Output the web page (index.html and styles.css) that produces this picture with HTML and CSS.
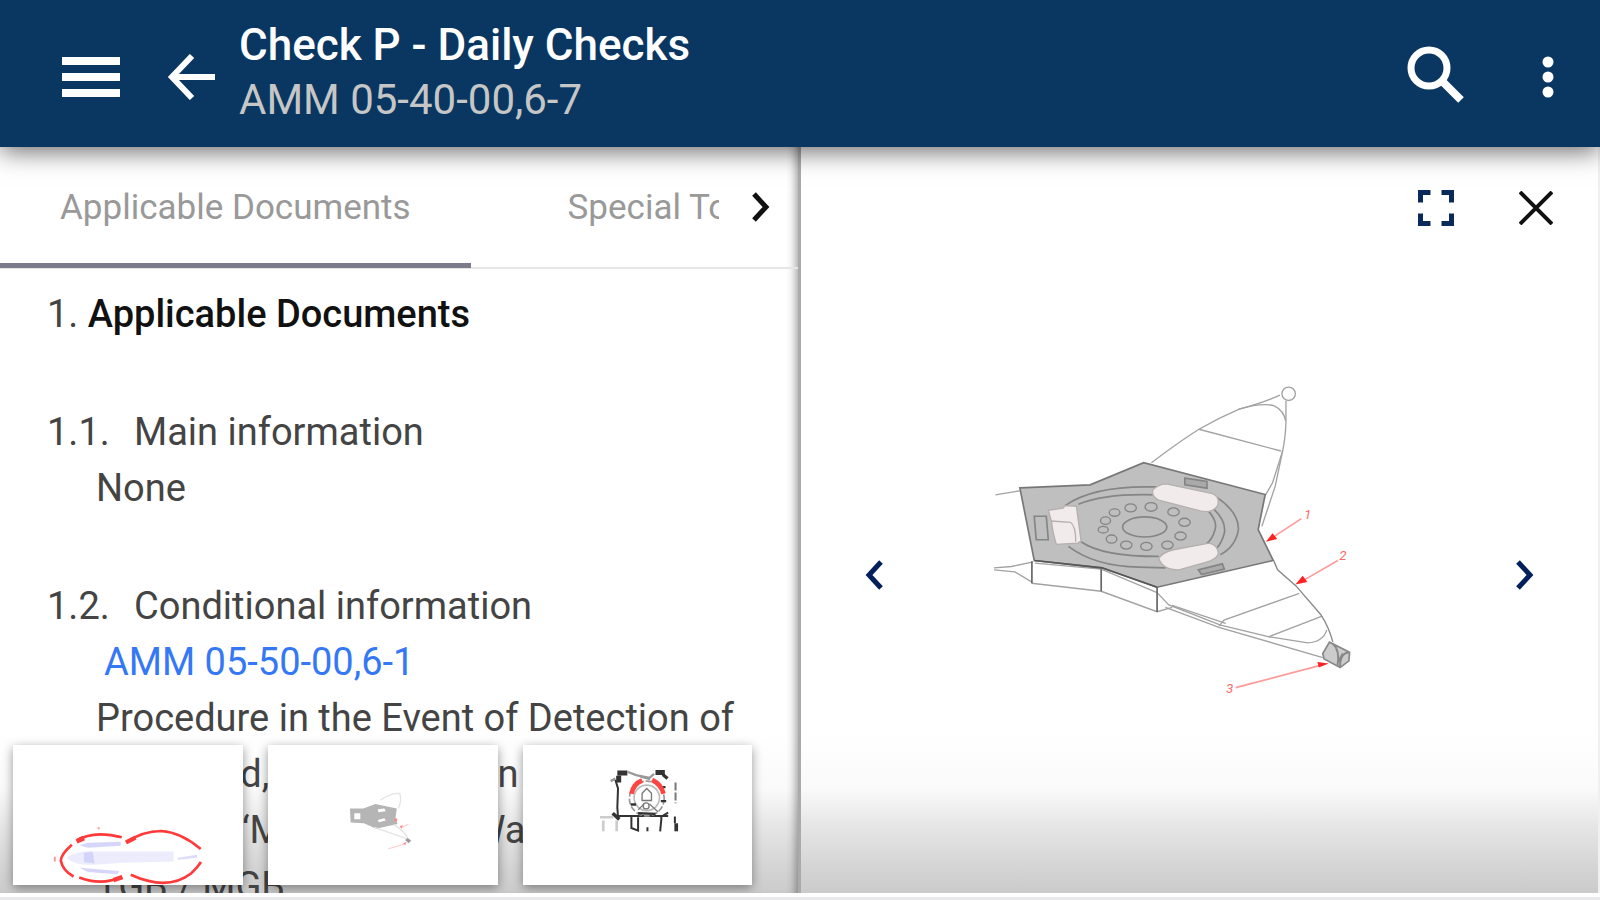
FILE: index.html
```html
<!DOCTYPE html>
<html lang="en">
<head>
  <meta charset="UTF-8" />
  <meta name="viewport" content="width=device-width, initial-scale=1.0" />
  <title>Check P - Daily Checks</title>
  <link rel="stylesheet" href="styles.css">
</head>
<body>
  <header class="topbar">
    <button class="icon-btn menu-btn" aria-label="Menu">
      <svg width="58" height="40" viewBox="0 0 58 40" fill="#fff"><path d="M0 0h58v8H0zM0 16h58v8H0zM0 32h58v8H0z"/></svg>
    </button>
    <button class="icon-btn back-btn" aria-label="Back">
      <svg width="48" height="46" viewBox="0 0 48 46" fill="none" stroke="#fff" stroke-width="6"><path d="M4 23h44M25 2L5 23l20 21"/></svg>
    </button>
    <div class="titles">
      <h1>Check P - Daily Checks</h1>
      <p>AMM 05-40-00,6-7</p>
    </div>
    <button class="icon-btn search-btn" aria-label="Search">
      <svg width="58" height="58" viewBox="0 0 58 58" fill="none" stroke="#fff"><circle cx="22" cy="22" r="18" stroke-width="7"/><path d="M36 36l18 18" stroke-width="8"/></svg>
    </button>
    <button class="icon-btn" aria-label="More options">
      <svg width="12" height="42" viewBox="0 0 12 42" fill="#fff"><circle cx="6" cy="6" r="5.5"/><circle cx="6" cy="21" r="5.5"/><circle cx="6" cy="36" r="5.5"/></svg>
    </button>
  </header>

  <main class="content">
    <section class="doc-pane">
      <nav class="tabs">
        <div class="tab-list">
          <a href="#applicable" class="tab active">Applicable Documents</a>
          <a href="#tools" class="tab">Special Tools</a>
        </div>
        <button class="icon-btn tab-next" aria-label="Next tabs">
          <svg width="18" height="30" viewBox="0 0 18 30" fill="none" stroke="#111" stroke-width="5"><path d="M2 2l12 13L2 28"/></svg>
        </button>
      </nav>

      <article class="doc" id="applicable">
        <h2>1. <b>Applicable Documents</b></h2>
        <h3><span class="num">1.1.</span>Main information</h3>
        <p>None</p>
        <h3><span class="num">1.2.</span>Conditional information</h3>
        <a href="#amm" class="ref">AMM 05-50-00,6-1</a>
        <p>Procedure in the Event of Detection of<br>Increased, High Vibration<br>Caution “Master Light Warning”<br>TGB / MGB</p>
      </article>

      <div class="thumbs">
        <button class="thumb" aria-label="Figure 1">
          <svg viewBox="0 0 687 420" fill="none">
            <g stroke="#ff3a3a" stroke-width="8">
              <path d="M190 286q50-32 135-10" stroke-width="8"/>
              <path d="M190 288l22-10" stroke-width="14"/>
              <path d="M338 291q50-34 105-34 60 4 118 54"/>
              <path d="M338 291l28-14" stroke-width="13"/>
              <path d="M176 298q-34 30-33 48 6 30 38 47"/>
              <path d="M198 396q66 26 128-2"/>
              <path d="M300 404l27-9" stroke-width="14"/>
              <path d="M352 388q110 50 180-4 20-18 30-34"/>
            </g>
            <path d="M256 246v6M125 334v14" stroke="#f99" stroke-width="6"/>
            <g fill="#7878f0">
              <path d="M160 336q30-20 80-18h240v30l-150 4-90 6q-60 2-80-22" opacity=".14"/>
              <path d="M198 300l26-8 98-3v12l-98 6zM198 366l26 3 94 8-6 9-88-6z" opacity=".3"/>
              <path d="M212 322l26-4 6 36-32-4z" opacity=".2"/>
              <path d="M490 338l60-10v9l-56 6z" opacity=".25"/>
            </g>
          </svg>
        </button>
        <button class="thumb" aria-label="Figure 2">
          <svg viewBox="0 0 687 420" fill="none">
            <path d="M245 190h40l36-14 64 14-4 28 6 18-64 14-36-16-40-2z" fill="#b5b5b5"/>
            <path d="M258 204h18v18h-18zM328 192l20-2 4 8-22 3zM328 224l20-5 4 7-20 5z" fill="#fff"/>
            <path d="M336 165q34-24 58-20 6 20-4 44M318 246l96 34M376 238q34 20 42 42" stroke="#e4e4e4" stroke-width="4"/>
            <path d="M410 284l8-6 10 8-8 8z" fill="#999"/>
            <path d="M398 248l22-12M360 310l48-14" stroke="#fcc" stroke-width="3"/>
            <path d="M378 220h8v8h-8zM394 242l10-2-6 10zM404 294l10-4-4 10z" fill="#f88"/>
          </svg>
        </button>
        <button class="thumb" aria-label="Figure 3">
          <svg viewBox="0 0 687 420" fill="none" stroke="#333">
            <path d="M282 84h30M396 82h28M286 92v20" stroke-width="15"/>
            <path d="M418 88l14 12" stroke-width="10"/>
            <path d="M276 104l8 26-2 56 2 30M284 212h150M434 202l-24 14" stroke-width="6"/>
            <path d="M268 204l20 18" stroke-width="11"/>
            <path d="M312 80l26 10 40 8 14-12M262 108l14-8M350 94l30 8" stroke="#999" stroke-width="7"/>
            <circle cx="370" cy="160" r="52" stroke="#999" stroke-width="5" stroke-dasharray="18 6"/>
            <circle cx="370" cy="158" r="38" stroke="#bbb" stroke-width="5"/>
            <path d="M356 144l14-14 14 14v22h-28zM344 194l18-18M378 176l26 24" stroke="#777" stroke-width="4"/>
            <circle cx="368" cy="182" r="9" stroke="#777" stroke-width="4"/>
            <path d="M322 178h16M412 126h14M412 168h16M344 204l52 2" stroke-width="7"/>
            <path d="M324 146q6-30 32-40M386 104q28 14 34 42" stroke="#f44" stroke-width="14"/>
            <path d="M456 112v62" stroke="#777" stroke-width="6" stroke-dasharray="24 6"/>
            <path d="M324 214v34l20 8v-40M372 246v12M414 216l-4 42M454 214v20" stroke-width="6"/>
            <path d="M458 234v24" stroke-width="11"/>
            <path d="M230 216h40M240 226v32M280 226v32" stroke="#ccc" stroke-width="8"/>
          </svg>
        </button>
      </div>
    </section>

    <section class="viewer">
      <div class="viewer-tools">
        <button class="icon-btn" aria-label="Full screen">
          <svg width="36" height="36" viewBox="0 0 36 36" fill="none" stroke="#0a2a5c" stroke-width="5"><path d="M2.500 12.500v-10h10M23.500 2.500h10v10M33.500 23.500v10h-10M12.500 33.500h-10v-10"/></svg>
        </button>
        <button class="icon-btn" aria-label="Close">
          <svg width="34" height="34" viewBox="0 0 34 34" fill="none" stroke="#111" stroke-width="4"><path d="M1 1l32 32M33 1L1 33"/></svg>
        </button>
      </div>
      <div class="viewer-body">
        <button class="icon-btn" aria-label="Previous figure">
          <svg width="18" height="30" viewBox="0 0 18 30" fill="none" stroke="#03205c" stroke-width="5"><path d="M16 2L4 15l12 13"/></svg>
        </button>
        <!-- mounting platform with the two support arms -->
        <svg class="figure" viewBox="0 0 1320 1230" fill="none" role="img" aria-label="Platform figure">
          <g stroke="#a2a2a2" stroke-width="4">
            <path d="M518 280Q600 218 660 180Q720 146 780 120Q850 102 902 78"/>
            <path d="M780 120Q850 100 885 110Q914 124 919 155"/>
            <path d="M920 95V160Q918 210 910 245L888 350 848 470"/>
            <path d="M910 245L880 340 858 378"/>
            <path d="M660 180L905 245"/>
            <circle cx="928" cy="74" r="20"/>
            <path d="M52 376L125 364M48 594L100 590 165 576M48 600L110 606 160 636"/>
            <path d="M160 640L368 664 535 725 580 712"/>
            <path d="M170 580L368 598 535 668"/>
            <path d="M535 668L570 705 725 765 870 800 985 818Q1030 816 1042 780"/>
            <path d="M560 712L720 772 1030 862M580 706L740 760"/>
            <path d="M720 768L735 750 960 670M868 800L1028 738"/>
            <path d="M884 574L895 600 950 648 1025 735Q1048 770 1060 815" stroke="#888"/>
          </g>
          <path d="M125 355L335 346 495 280 858 375 837 480 882 572 535 652 370 594 168 572z" fill="#bfbfbf" stroke="#777" stroke-width="5"/>
          <path d="M161 574v66M368 598v66M535 652v74" stroke="#666" stroke-width="5"/>
          <path d="M168 572L370 594 535 652" stroke="#555" stroke-width="5"/>
          <g stroke="#858585" stroke-width="5">
            <path d="M260 408Q340 352 500 352H560M270 530Q350 590 480 592L560 594M716 385Q780 430 778 480Q770 530 724 555"/>
            <path d="M300 404Q380 370 540 376M308 516Q370 560 540 560M688 424Q716 455 708 480Q700 510 680 524M706 420Q742 455 736 490Q728 520 714 534"/>
            <ellipse cx="498" cy="472" rx="66" ry="30"/>
            <g stroke-width="4">
              <ellipse cx="456" cy="415" rx="17" ry="12"/><ellipse cx="517" cy="412" rx="18" ry="13"/>
              <ellipse cx="584" cy="427" rx="17" ry="12"/><ellipse cx="617" cy="458" rx="17" ry="12"/>
              <ellipse cx="605" cy="499" rx="17" ry="12"/><ellipse cx="566" cy="526" rx="17" ry="12"/>
              <ellipse cx="503" cy="530" rx="17" ry="12"/><ellipse cx="443" cy="526" rx="17" ry="12"/>
              <ellipse cx="399" cy="508" rx="16" ry="12"/><ellipse cx="374" cy="480" rx="15" ry="10"/>
              <ellipse cx="381" cy="453" rx="15" ry="11"/><ellipse cx="408" cy="429" rx="16" ry="11"/>
            </g>
            <path d="M168 440h36l6 70h-36z"/>
            <path d="M618 326l66 10v20l-66-10zM658 600l72-18 6 16-68 16z" fill="#aaa"/>
          </g>
          <g fill="#f1eceb" stroke="#b5afad" stroke-width="4">
            <path d="M210 422l44-6 6-8 34 2 14 104-10 6-64 4q-12-40-14-66z"/>
            <path d="M218 454l58 4q16 10 16 58" fill="none"/>
            <path d="M522 362Q540 342 566 344L700 372Q724 382 716 408Q700 432 664 424L540 392Q518 382 522 362z"/>
            <path d="M540 566Q550 548 584 540L690 520Q718 526 718 552Q712 570 680 578L600 600Q552 600 540 566z"/>
          </g>
          <path d="M1030 850L1050 816 1110 846 1108 872 1082 892 1034 866z" fill="#ccc" stroke="#888" stroke-width="5"/>
          <path d="M1060 820q22 20 14 66M1108 846q-28 4-26 44M1090 850l-14 24" stroke="#888" stroke-width="6"/>
          <g stroke="#ff9a9a" stroke-width="5">
            <path d="M966 447L885 500M1075 572L975 630M770 952L1020 886"/>
          </g>
          <path d="M860 516l20-25 14 17zM948 644l22-26 14 18zM1048 880l-34-5 4 17z" fill="#f22"/>
          <g class="callouts">
            <text x="974" y="447">1</text>
            <text x="1079" y="570">2</text>
            <text x="741" y="968">3</text>
          </g>
        </svg>
        <button class="icon-btn" aria-label="Next figure">
          <svg width="18" height="30" viewBox="0 0 18 30" fill="none" stroke="#03205c" stroke-width="5"><path d="M2 2l12 13L2 28"/></svg>
        </button>
      </div>
    </section>
  </main>
</body>
</html>
```
FILE: styles.css
```css
* { box-sizing: border-box; }
body { margin: 0; height: 100vh; display: flex; flex-direction: column; font-family: Roboto, sans-serif; background: #fff; color: #444; overflow: hidden; border-bottom: 3px solid #e9e9ec; }
h1, h2, h3, p { margin: 0; font-weight: 400; }
a { text-decoration: none; }
svg { display: block; }
.icon-btn { padding: 0; border: none; background: none; cursor: pointer; }

.topbar { position: relative; z-index: 2; display: flex; align-items: center; height: 147px; padding: 6px 46px 0 62px; background: #093761; box-shadow: 0 4px 24px rgba(0,0,0,0.6); }
.back-btn { margin: 0 24px 0 47px; }
.titles { flex: 1; padding-bottom: 10px; }
.titles h1 { font-size: 44px; line-height: 56px; font-weight: 500; color: #fff; }
.titles p { font-size: 42px; line-height: 54px; color: #c6c6c6; }
.search-btn { margin: 0 77px 4px 0; }

.content { flex: 1; display: flex; min-height: 0; margin-bottom: 4px; background: linear-gradient(to bottom, #fff 78%, #fafafa 86%, #e6e6e6 91%, #d6d6d6 96%, #cbcbcb 100%); }
.doc-pane { position: relative; flex: 1; min-width: 0; overflow: hidden; border-right: 3px solid #aaa; box-shadow: inset -10px 0 10px -8px rgba(0,0,0,0.4); }
.tabs { display: flex; align-items: center; height: 122px; border-bottom: 2px solid #e6e6e6; padding-right: 28px; }
.tab-list { display: flex; flex: 1; height: 122px; overflow: hidden; }
.tab { flex: none; padding: 38px 60px 0; font-size: 35px; line-height: 48px; color: #999; white-space: nowrap; }
.tab + .tab { padding-left: 97px; }
.tab.active { border-bottom: 5px solid #7b7b8c; }
.tab-next { margin-left: 33px; }

.doc { padding: 17px 0 0 47px; font-size: 38px; line-height: 56px; white-space: nowrap; }
.doc h2, .doc h3 { font-size: 38px; line-height: 56px; }
.doc h2 b { font-weight: 500; color: #111; }
.doc h3 { margin-top: 62px; }
.num { display: inline-block; width: 87px; }
.doc p { padding-left: 49px; }
.ref { display: block; padding-left: 57px; color: #3478f6; }

.thumbs { position: absolute; left: 13px; right: 45px; bottom: 8px; display: flex; gap: 25px; }
.thumb { flex: 1; padding: 0; border: none; background: #fff; box-shadow: 0 3px 10px rgba(0,0,0,0.4); cursor: pointer; }
.thumb svg { width: 100%; }

.viewer { flex: 1; min-width: 0; display: flex; flex-direction: column; border-right: 2px solid #f0f0f0; }
.viewer-tools { display: flex; justify-content: flex-end; align-items: center; gap: 65px; height: 122px; padding-right: 45px; }
.viewer-body { flex: 1; display: flex; align-items: center; justify-content: space-between; padding: 0 64px 12px; min-height: 0; }
.figure { width: 66%; }
.callouts { font-size: 40px; font-style: italic; fill: #ff6b6b; }
```
